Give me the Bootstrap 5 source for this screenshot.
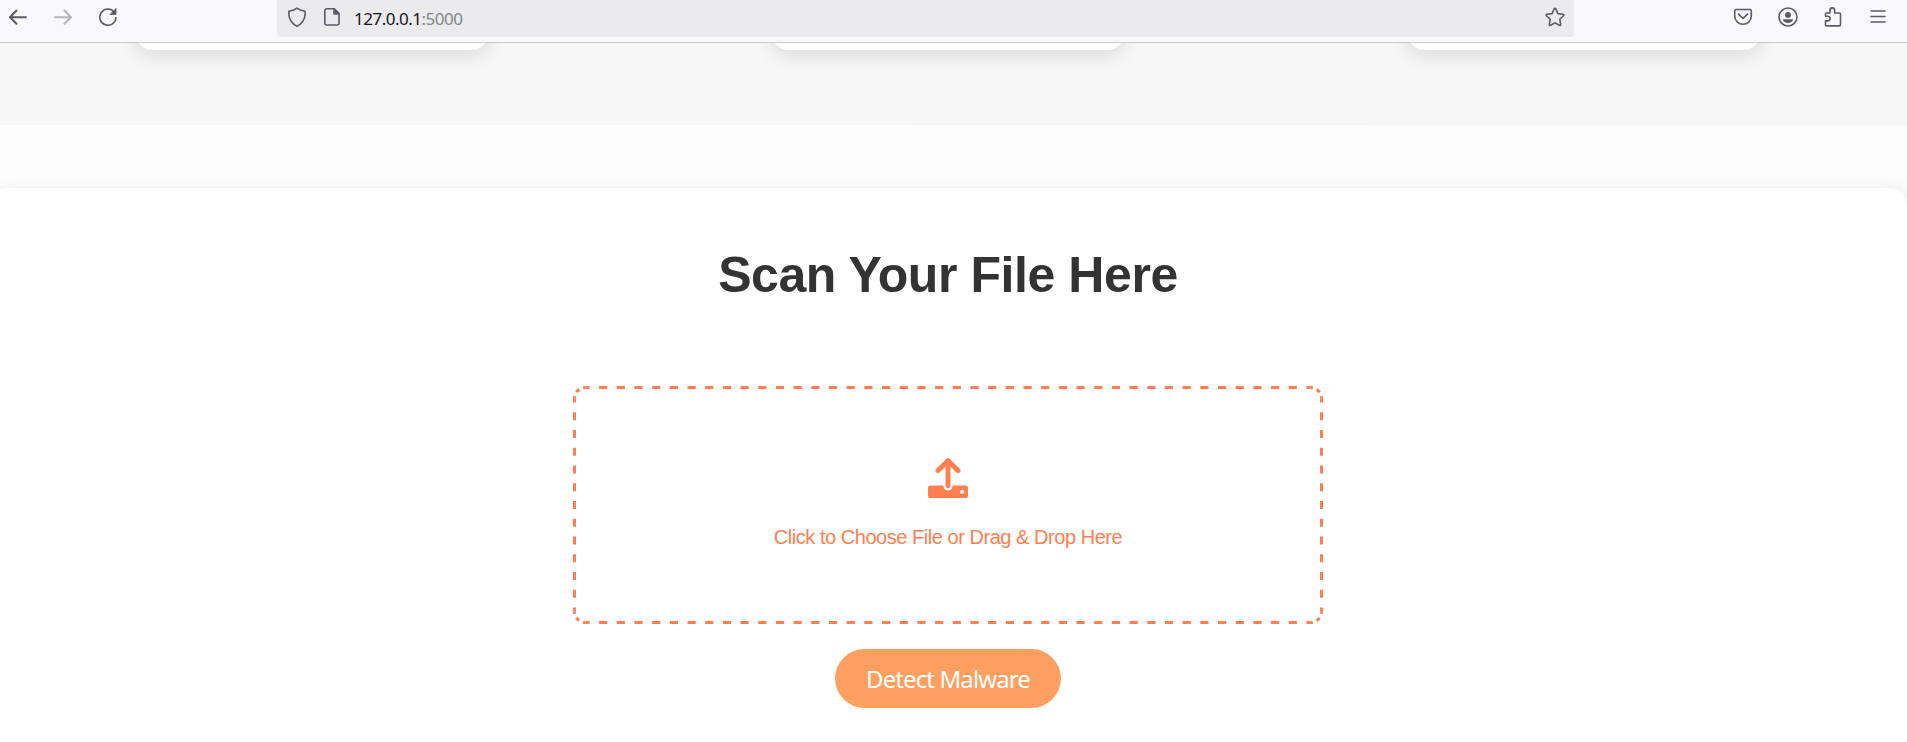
<!DOCTYPE html>
<html lang="en">
<head>
<meta charset="utf-8">
<meta name="viewport" content="width=device-width, initial-scale=1">
<title>Malware Scanner</title>
<link href="https://cdn.jsdelivr.net/npm/bootstrap@5.3.0/dist/css/bootstrap.min.css" rel="stylesheet">
<style>
  body { font-family: "Liberation Sans", Arial, sans-serif; background: #fff; }
  main { height: 699px; }
  .toolbar { height: 43px; background: #f9f9fb; border-bottom: 1px solid #c9c9cd; color: #5b5b66; }
  .toolbar svg { display: block; fill: none; stroke: currentColor; stroke-width: 1.6; stroke-linecap: round; stroke-linejoin: round; }
  .nav-tools { width: 277px; height: 34px; padding-left: 8px; gap: 25px; }
  .address { width: 1297px; height: 37px; background: #ebebed; border-radius: 0 0 4px 4px; padding: 0 9px 3px 10px; font: 17px "Noto Sans", "Open Sans", sans-serif; }
  .url-text { margin-left: 13px; letter-spacing: -.5px; line-height: 34px; padding-top: 3px; color: #15141a; }
  .url-text span { color: #85858a; }
  .menu-tools { height: 34px; gap: 25px; padding-right: 19px; }
  .features { height: 82px; background: #f7f7f7; padding-left: 136px; gap: 284px; overflow: hidden; }
  .tile { width: 352px; height: 60px; margin-top: -53px; flex: none; background: #fff; border-radius: 16px; box-shadow: 0 5px 19px rgba(0,0,0,.12); }
  .scan-area { height: 617px; padding-top: 63px; background: linear-gradient(135deg, #fdfdfd, #fbfbfb); overflow: hidden; }
  .panel { width: 1918px; height: 620px; margin-left: -11px; padding-top: 52px; background: #fff; border-radius: 19px; box-shadow: 0 5px 19px rgba(0,0,0,.1); }
  .panel h2 { font-size: 50px; line-height: 70px; font-weight: 700; color: #333; letter-spacing: -.43px; }
  .drop { width: 750px; height: 238px; margin-top: 76px; color: #ff7f50; padding-top: 72px; font-size: 20px; }
  .drop p { line-height: 24px; margin-top: 27px; letter-spacing: -.46px; }
  .dashes { fill: none; stroke: #ff7f50; stroke-width: 3; }
  .detect { width: 226px; height: 59px; margin-top: 25px; padding: 0; border: 0; background: #ffa060; color: #fff; font: 24px "Noto Sans", sans-serif; letter-spacing: -.9px; }
</style>
</head>
<body class="overflow-hidden">
<header class="toolbar d-flex align-items-start">
  <nav class="nav-tools d-flex align-items-center">
    <svg width="20" height="20" viewBox="0 0 20 20"><path d="M18 10.300H2M8.500 3.500L2 10.300l6.500 6.500" stroke-width="2"/></svg>
    <svg width="20" height="20" viewBox="0 0 20 20" opacity=".42"><path d="M2 10.300h16M11.500 3.500l6.500 6.800-6.500 6.500" stroke-width="2"/></svg>
    <svg width="20" height="20" viewBox="0 0 20 20"><path d="M16.300 5.200A8.100 8.100 0 1 0 18 10.500"/><path d="M18 1.700v5.800h-5.800z" fill="currentColor" stroke-width=".8"/></svg>
  </nav>
  <div class="address d-flex align-items-center">
    <svg width="20" height="20" viewBox="0 0 20 20"><path d="M10 1.100C8 2.700 5.100 3.600 1.900 4.200v3.500C2.100 12.300 5.500 17.300 10 19.200c4.500-1.900 7.900-6.900 8.100-11.500V4.200C14.900 3.600 12 2.700 10 1.100z"/></svg>
    <svg class="ms-3" width="18" height="20" viewBox="0 0 18 20"><path d="M3.800 1.800h7.500L16 6.600V16a2 2 0 0 1-2 2H3.800a2 2 0 0 1-2-2V3.800a2 2 0 0 1 2-2z"/><path d="M11 1.900v5h5z" fill="currentColor"/></svg>
    <div class="url-text">127.0.0.1<span>:5000</span></div>
    <svg class="ms-auto" width="20" height="20" viewBox="0 0 20 20"><path d="M9.200 1.900q.8-1.400 1.600 0l2.100 4.700 5.100.7q1.500.3.500 1.400l-3.700 3.600.9 5.100q.1 1.600-1.300.9L10 15.900l-4.400 2.400q-1.400.7-1.300-.9l.9-5.100-3.700-3.600q-1-1.100.5-1.400l5.100-.7z"/></svg>
  </div>
  <div class="menu-tools d-flex align-items-center ms-auto">
    <svg width="20" height="20" viewBox="0 0 20 20"><path d="M3.200 2.500h13.600q1.500 0 1.500 1.500v5a8.300 8.300 0 0 1-16.600 0V4q0-1.500 1.500-1.500zM5.500 7.100l4.500 4.300 4.500-4.300"/></svg>
    <svg width="20" height="20" viewBox="0 0 20 20"><circle cx="10" cy="10" r="9"/><circle cx="10" cy="8" r="3" fill="currentColor" stroke="none"/><path d="M4.600 12.300h10.800c-.8 2.400-2.700 3.700-5.400 3.700s-4.600-1.300-5.400-3.700z" fill="currentColor" stroke="none"/></svg>
    <svg width="20" height="20" viewBox="0 0 20 20"><path d="M2.500 9.300V7q0-1 1-1H7V3.200a2.300 2.300 0 0 1 4.600 0V6h4.700q1.200 0 1.200 1.200v10.500q0 1.200-1.200 1.200H3.500q-1 0-1-1v-4h2.300a2.300 2.300 0 0 0 0-4.600z"/></svg>
    <svg width="20" height="20" viewBox="0 0 20 20"><path d="M3 4h14M3 9.500h14M3 15h14"/></svg>
  </div>
</header>
<main class="overflow-hidden">
  <section class="features d-flex">
    <div class="tile"></div><div class="tile"></div><div class="tile"></div>
  </section>
  <section class="scan-area">
    <div class="panel d-flex flex-column align-items-center">
      <h2 class="m-0">Scan Your File Here</h2>
      <div class="drop position-relative d-flex flex-column align-items-center">
        <svg class="dashes position-absolute top-0 start-0" width="750" height="238" viewBox="0 0 750 238">
          <path stroke-dasharray="8.200 9.483" stroke-dashoffset="4.100" d="M12.500 1.500h725M12.500 236.500h725"/>
          <path stroke-dasharray="8.200 9.550" stroke-dashoffset="4.100" d="M1.500 12.500v213M748.500 12.500v213"/>
          <path stroke-dasharray="2.500 4.100 4.080 4.100 2.500 0" d="M1.500 12.500a11 11 0 0 1 11-11M737.500 1.500a11 11 0 0 1 11 11M748.500 225.500a11 11 0 0 1-11 11M12.500 236.500a11 11 0 0 1-11-11"/>
        </svg>
        <svg width="40" height="40" viewBox="0 0 40 40" fill="currentColor"><path d="M2.300 27.500h13a5 5 0 0 0 9.400 0h13q2.300 0 2.300 2.300v7.900q0 2.300-2.300 2.300H2.300Q0 40 0 37.700v-7.900q0-2.300 2.300-2.300z"/><circle cx="34" cy="33.700" r="2" fill="#fff"/><path d="M20 28V3" fill="none" stroke="#fff" stroke-width="9" stroke-linecap="round"/><path d="M20 27.500V3M10 12.500L20 2.700l10 9.800" fill="none" stroke="currentColor" stroke-width="5" stroke-linecap="round" stroke-linejoin="round"/></svg>
        <p class="mb-0">Click to Choose File or Drag &amp; Drop Here</p>
      </div>
      <button class="detect btn rounded-pill" type="button">Detect Malware</button>
    </div>
  </section>
</main>
<script src="https://cdn.jsdelivr.net/npm/bootstrap@5.3.0/dist/js/bootstrap.bundle.min.js"></script>
</body>
</html>
